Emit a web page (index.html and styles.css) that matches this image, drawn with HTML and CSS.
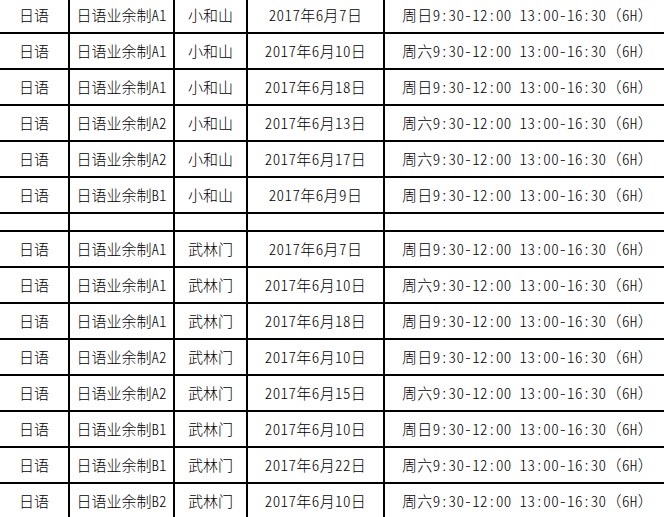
FILE: index.html
```html
<!DOCTYPE html>
<html lang="zh-CN">
<head>
<meta charset="utf-8">
<link rel="stylesheet" href="styles.css">
</head>
<body>
<table class="schedule">
  <colgroup>
    <col class="c-lang"><col class="c-course"><col class="c-place"><col class="c-date"><col class="c-time">
  </colgroup>
  <tbody>
    <tr><td>日语</td><td>日语业余制A1</td><td>小和山</td><td class="num">2017年6月7日</td><td class="num">周日9:30-12:00 13:00-16:30<span class="fw">（</span>6H<span class="fw">）</span></td></tr>
    <tr><td>日语</td><td>日语业余制A1</td><td>小和山</td><td class="num">2017年6月10日</td><td class="num">周六9:30-12:00 13:00-16:30<span class="fw">（</span>6H<span class="fw">）</span></td></tr>
    <tr><td>日语</td><td>日语业余制A1</td><td>小和山</td><td class="num">2017年6月18日</td><td class="num">周日9:30-12:00 13:00-16:30<span class="fw">（</span>6H<span class="fw">）</span></td></tr>
    <tr><td>日语</td><td>日语业余制A2</td><td>小和山</td><td class="num">2017年6月13日</td><td class="num">周六9:30-12:00 13:00-16:30<span class="fw">（</span>6H<span class="fw">）</span></td></tr>
    <tr><td>日语</td><td>日语业余制A2</td><td>小和山</td><td class="num">2017年6月17日</td><td class="num">周六9:30-12:00 13:00-16:30<span class="fw">（</span>6H<span class="fw">）</span></td></tr>
    <tr><td>日语</td><td>日语业余制B1</td><td>小和山</td><td class="num">2017年6月9日</td><td class="num">周日9:30-12:00 13:00-16:30<span class="fw">（</span>6H<span class="fw">）</span></td></tr>
    <tr class="gap"><td></td><td></td><td></td><td></td><td></td></tr>
    <tr><td>日语</td><td>日语业余制A1</td><td>武林门</td><td class="num">2017年6月7日</td><td class="num">周日9:30-12:00 13:00-16:30<span class="fw">（</span>6H<span class="fw">）</span></td></tr>
    <tr><td>日语</td><td>日语业余制A1</td><td>武林门</td><td class="num">2017年6月10日</td><td class="num">周六9:30-12:00 13:00-16:30<span class="fw">（</span>6H<span class="fw">）</span></td></tr>
    <tr><td>日语</td><td>日语业余制A1</td><td>武林门</td><td class="num">2017年6月18日</td><td class="num">周日9:30-12:00 13:00-16:30<span class="fw">（</span>6H<span class="fw">）</span></td></tr>
    <tr><td>日语</td><td>日语业余制A2</td><td>武林门</td><td class="num">2017年6月10日</td><td class="num">周日9:30-12:00 13:00-16:30<span class="fw">（</span>6H<span class="fw">）</span></td></tr>
    <tr><td>日语</td><td>日语业余制A2</td><td>武林门</td><td class="num">2017年6月15日</td><td class="num">周六9:30-12:00 13:00-16:30<span class="fw">（</span>6H<span class="fw">）</span></td></tr>
    <tr><td>日语</td><td>日语业余制B1</td><td>武林门</td><td class="num">2017年6月10日</td><td class="num">周日9:30-12:00 13:00-16:30<span class="fw">（</span>6H<span class="fw">）</span></td></tr>
    <tr><td>日语</td><td>日语业余制B1</td><td>武林门</td><td class="num">2017年6月22日</td><td class="num">周六9:30-12:00 13:00-16:30<span class="fw">（</span>6H<span class="fw">）</span></td></tr>
    <tr><td>日语</td><td>日语业余制B2</td><td>武林门</td><td class="num">2017年6月10日</td><td class="num">周六9:30-12:00 13:00-16:30<span class="fw">（</span>6H<span class="fw">）</span></td></tr>
  </tbody>
</table>
</body>
</html>
```
FILE: styles.css
```css
html, body {
  margin: 0;
  padding: 0;
  background: #fff;
  overflow: hidden;
}
.schedule {
  margin-top: -4px;
  width: 664px;
  table-layout: fixed;
  border-collapse: collapse;
  font-family: "Noto Sans CJK SC", sans-serif;
  font-feature-settings: "hwid" 1;
  font-size: 15px;
  font-weight: 300;
  color: #000;
}
.c-lang { width: 69px; }
.c-course { width: 105px; }
.c-place { width: 73px; }
.c-date { width: 137px; }
.c-time { width: 280px; }
.schedule td {
  height: 34px;
  padding: 0;
  border: 2px solid #000;
  text-align: center;
  vertical-align: middle;
  white-space: nowrap;
  line-height: 18px;
}
.schedule td.num { letter-spacing: 0.4px; }
.schedule td:first-child { border-left: none; }
.schedule td:last-child { border-right: none; padding-left: 6px; }
.schedule tr.gap td { height: 16px; }
.fw { font-feature-settings: normal; }
```
